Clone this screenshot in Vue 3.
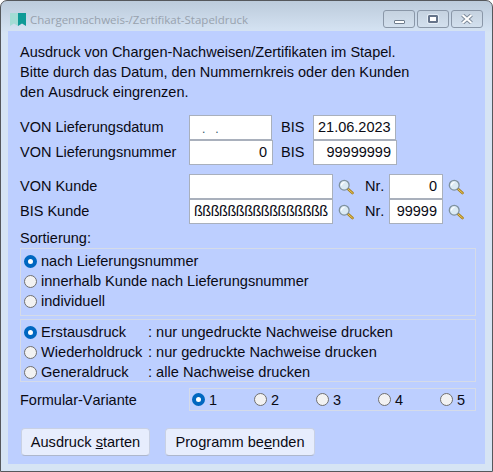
<script setup>
const sorts = [
  { label: 'nach Lieferungsnummer', on: true },
  { label: 'innerhalb Kunde nach Lieferungsnummer', on: false },
  { label: 'individuell', on: false },
]
const modes = [
  { name: 'Erstausdruck', note: ': nur ungedruckte Nachweise drucken', on: true },
  { name: 'Wiederholdruck', note: ': nur gedruckte Nachweise drucken', on: false },
  { name: 'Generaldruck', note: ': alle Nachweise drucken', on: false },
]
const variants = [1, 2, 3, 4, 5]
const emptyDate = '.   .'
</script>

<template>
  <div class="window">
    <header class="titlebar">
      <svg class="app-icon" width="16" height="13" viewBox="0 0 16 13">
        <path d="M0 0H8V13L4 10.5L0 13Z" fill="#a3dcd5" />
        <path d="M8 0H16V13L12 10.5L8 13Z" fill="#0f9a97" />
      </svg>
      <span class="title">Chargennachweis-/Zertifikat-Stapeldruck</span>
      <div class="controls">
        <div class="ctl"><span class="g-min"></span></div>
        <div class="ctl"><span class="g-max"></span></div>
        <div class="ctl">
          <svg width="12" height="10" viewBox="0 0 12 10">
            <path d="M1.5 1L10.5 9M10.5 1L1.5 9" stroke="#7f8c9c" stroke-width="4" />
            <path d="M1.5 1L10.5 9M10.5 1L1.5 9" stroke="#fff" stroke-width="2" />
          </svg>
        </div>
      </div>
    </header>

    <main class="client">
      <p class="intro">
        Ausdruck von Chargen-Nachweisen/Zertifikaten im Stapel.<br />
        Bitte durch das Datum, den Nummernkreis oder den Kunden<br />
        den Ausdruck eingrenzen.
      </p>

      <div class="range">
        <div class="row">
          <span class="lbl">VON Lieferungsdatum</span>
          <div class="field w83 dots">{{ emptyDate }}</div>
          <span class="bis">BIS</span>
          <div class="field w83 left">21.06.2023</div>
        </div>
        <div class="row">
          <span class="lbl">VON Lieferungsnummer</span>
          <div class="field w84 num">0</div>
          <span class="bis">BIS</span>
          <div class="field w84 num">99999999</div>
        </div>
      </div>

      <div class="customers">
        <div class="row">
          <span class="lbl">VON Kunde</span>
          <div class="field w144"></div>
          <svg class="lens" width="16" height="16" viewBox="0 0 16 16">
            <path d="M9.5 9.5L14.5 14" stroke="#a8801c" stroke-width="2.6" stroke-linecap="round" />
            <path d="M10.5 10.5L14.5 14" stroke="#f0cf62" stroke-width="1" stroke-linecap="round" />
            <circle cx="6.2" cy="6.2" r="4.9" fill="#dbeaf4" stroke="#7f929f" stroke-width="1.3" />
            <path d="M3.5 6.5A3 3 0 0 1 6.5 3.5" stroke="#fff" stroke-width="1.2" fill="none" />
          </svg>
          <span class="nr">Nr.</span>
          <div class="field w54 num">0</div>
          <svg class="lens" width="16" height="16" viewBox="0 0 16 16">
            <path d="M9.5 9.5L14.5 14" stroke="#a8801c" stroke-width="2.6" stroke-linecap="round" />
            <path d="M10.5 10.5L14.5 14" stroke="#f0cf62" stroke-width="1" stroke-linecap="round" />
            <circle cx="6.2" cy="6.2" r="4.9" fill="#dbeaf4" stroke="#7f929f" stroke-width="1.3" />
            <path d="M3.5 6.5A3 3 0 0 1 6.5 3.5" stroke="#fff" stroke-width="1.2" fill="none" />
          </svg>
        </div>
        <div class="row">
          <span class="lbl">BIS Kunde</span>
          <div class="field w144 left clip">ßßßßßßßßßßßßßßßß</div>
          <svg class="lens" width="16" height="16" viewBox="0 0 16 16">
            <path d="M9.5 9.5L14.5 14" stroke="#a8801c" stroke-width="2.6" stroke-linecap="round" />
            <path d="M10.5 10.5L14.5 14" stroke="#f0cf62" stroke-width="1" stroke-linecap="round" />
            <circle cx="6.2" cy="6.2" r="4.9" fill="#dbeaf4" stroke="#7f929f" stroke-width="1.3" />
            <path d="M3.5 6.5A3 3 0 0 1 6.5 3.5" stroke="#fff" stroke-width="1.2" fill="none" />
          </svg>
          <span class="nr">Nr.</span>
          <div class="field w54 num">99999</div>
          <svg class="lens" width="16" height="16" viewBox="0 0 16 16">
            <path d="M9.5 9.5L14.5 14" stroke="#a8801c" stroke-width="2.6" stroke-linecap="round" />
            <path d="M10.5 10.5L14.5 14" stroke="#f0cf62" stroke-width="1" stroke-linecap="round" />
            <circle cx="6.2" cy="6.2" r="4.9" fill="#dbeaf4" stroke="#7f929f" stroke-width="1.3" />
            <path d="M3.5 6.5A3 3 0 0 1 6.5 3.5" stroke="#fff" stroke-width="1.2" fill="none" />
          </svg>
        </div>
      </div>

      <div class="sort-label">Sortierung:</div>
      <div class="group">
        <div v-for="s in sorts" :key="s.label" class="opt">
          <span class="radio" :class="{ on: s.on }"></span>
          <span>{{ s.label }}</span>
        </div>
      </div>

      <div class="group second">
        <div v-for="m in modes" :key="m.name" class="opt">
          <span class="radio" :class="{ on: m.on }"></span>
          <span class="mode">{{ m.name }}</span>
          <span>{{ m.note }}</span>
        </div>
      </div>

      <div class="variant">
        <span class="variant-label">Formular-Variante</span>
        <div class="variant-box">
          <div v-for="v in variants" :key="v" class="vopt">
            <span class="radio" :class="{ on: v === 1 }"></span>
            <span>{{ v }}</span>
          </div>
        </div>
      </div>

      <div class="buttons">
        <button class="btn b1" type="button">Ausdruck <u>s</u>tarten</button>
        <button class="btn b2" type="button">Programm be<u>e</u>nden</button>
      </div>
    </main>
  </div>
</template>

<style>
html, body { margin: 0; padding: 0; background: #fff; }
</style>

<style scoped>
.window {
  box-sizing: border-box;
  width: 493px;
  height: 472px;
  border: 1px solid #55585c;
  border-radius: 7px 7px 0 0;
  padding: 0 7px 7px;
  display: flex;
  flex-direction: column;
  background: linear-gradient(#bccbdb 0, #d6e4f4 32px);
  font-family: "Liberation Sans", Arial, sans-serif;
  font-size: 14.5px;
  font-kerning: none;
  color: #0a0a14;
  overflow: hidden;
}
.titlebar {
  height: 30px;
  flex: none;
  display: flex;
  align-items: flex-start;
  box-sizing: border-box;
}
.app-icon { margin: 12px 4px 0 2px; flex: none; }
.title {
  font-family: "Open Sans", "Noto Sans", sans-serif;
  font-size: 11.5px;
  line-height: 16px;
  margin-top: 11px;
  color: #98a2ae;
  flex: 1;
  white-space: nowrap;
}
.controls { display: flex; gap: 2px; margin-right: 2px; margin-top: 9px; }
.ctl {
  box-sizing: border-box;
  width: 32px;
  height: 18px;
  border: 1px solid #8a97a8;
  border-radius: 3px;
  display: flex;
  align-items: center;
  justify-content: center;
  background: linear-gradient(#c5d2e0, #d3e0ee);
}
.g-min {
  width: 9px;
  height: 2px;
  margin-top: 5px;
  background: #fff;
  border: 1px solid #6f7c8c;
  border-radius: 1px;
}
.g-max {
  box-sizing: border-box;
  width: 10px;
  height: 8px;
  border: 2px solid #66748a;
  border-radius: 1px;
  background: #fff;
  outline: 1px solid #e6eef6;
}
.client {
  flex: 1;
  background: #bdcfff;
  padding: 11px 9px 0 12px;
  min-height: 0;
}
.intro {
  margin: 0;
  line-height: 20px;
}
.range { margin-top: 13px; }
.customers { margin-top: 9px; }
.row {
  display: flex;
  align-items: center;
  height: 25px;
}
.lbl { width: 169px; flex: none; white-space: nowrap; padding-bottom: 2px; }
.field {
  box-sizing: border-box;
  height: 25px;
  background: #fff;
  border: 1px solid #a9b0bc;
  line-height: 23px;
  padding: 0 5px 0 4px;
  flex: none;
  white-space: nowrap;
}
.w83 { width: 83px; }
.w84 { width: 84px; }
.w144 { width: 144px; }
.w54 { width: 54px; }
.num { text-align: right; }
.dots { padding-left: 12px; font-size: 12px; line-height: 27px; color: #2f5468; white-space: pre; }
.clip { overflow: hidden; padding: 0 3px 0 4px; letter-spacing: -0.5px; }
.bis { flex: none; margin-left: 9px; width: 32px; padding-bottom: 2px; }
.range .row:nth-child(2) .bis { margin-left: 8px; }
.lens { margin-left: 5px; flex: none; }
.nr { width: 24px; margin-left: 11px; flex: none; padding-bottom: 2px; }
.sort-label {
  margin-top: 4px;
  height: 20px;
  line-height: 20px;
}
.group {
  box-sizing: border-box;
  width: 456px;
  height: 68px;
  border: 1px solid #d5dbe8;
  padding: 2px 0 0 3px;
  font-size: 14.6px;
}
.second {
  height: 63px;
  margin-top: 3px;
  padding-top: 2px;
}
.opt {
  display: flex;
  align-items: center;
  height: 20px;
  white-space: nowrap;
}
.mode { width: 107px; flex: none; }
.radio {
  box-sizing: border-box;
  display: block;
  flex: none;
  width: 13px;
  height: 13px;
  border-radius: 50%;
  border: 1px solid #707070;
  background: #f2f2f2;
  margin-right: 4px;
}
.radio.on {
  border: 4px solid #0067c0;
  background: #fff;
}
.variant {
  display: flex;
  align-items: center;
  margin-top: 6px;
  height: 23px;
}
.variant-label { width: 169px; flex: none; }
.variant-box {
  box-sizing: border-box;
  width: 287px;
  height: 23px;
  border: 1px solid #d5dbe8;
  display: flex;
  align-items: center;
  padding-left: 2px;
}
.vopt {
  display: flex;
  align-items: center;
  width: 62px;
  flex: none;
}
.vopt .radio { margin-right: 4px; }
.buttons {
  display: flex;
  margin-top: 17px;
  margin-left: 1px;
}
.btn {
  box-sizing: border-box;
  height: 28px;
  background: #e7edfd;
  border: 1px solid #c9d1e4;
  border-bottom-color: #aeb7cc;
  border-radius: 4px;
  font: inherit;
  font-size: 14.6px;
  font-kerning: none;
  color: inherit;
  padding: 0;
}
.b1 { width: 129px; }
.b2 { width: 150px; margin-left: 15px; }
</style>
